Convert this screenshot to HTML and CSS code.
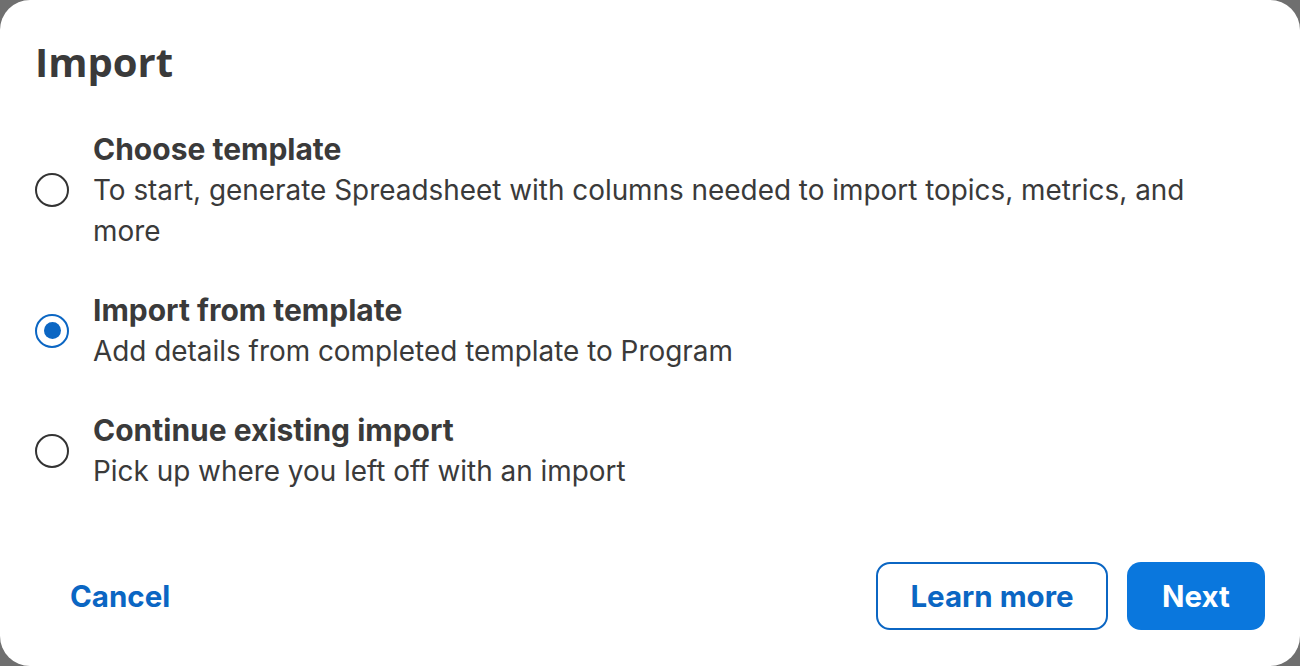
FILE: index.html
```html
<!DOCTYPE html>
<html>
<head>
<meta charset="utf-8">
<link rel="stylesheet" href="styles.css">
</head>
<body>
<div class="dialog">
  <h1 class="title">Import</h1>
  <div class="options">
    <label class="option">
      <span class="radio"></span>
      <span class="text">
        <span class="opt-title">Choose template</span>
        <span class="opt-desc">To start, generate Spreadsheet with columns needed to import topics, metrics, and more</span>
      </span>
    </label>
    <label class="option">
      <span class="radio checked"></span>
      <span class="text">
        <span class="opt-title">Import from template</span>
        <span class="opt-desc">Add details from completed template to Program</span>
      </span>
    </label>
    <label class="option">
      <span class="radio"></span>
      <span class="text">
        <span class="opt-title">Continue existing import</span>
        <span class="opt-desc">Pick up where you left off with an import</span>
      </span>
    </label>
  </div>
  <div class="footer">
    <button class="btn link">Cancel</button>
    <div class="actions">
      <button class="btn outline">Learn more</button>
      <button class="btn primary">Next</button>
    </div>
  </div>
</div>
</body>
</html>
```
FILE: styles.css
```css
html, body {
  margin: 0;
  padding: 0;
  height: 100%;
  background: #6f6f6f;
}
body {
  font-family: Inter, "Liberation Sans", sans-serif;
  color: #3a3a3a;
}
.dialog {
  box-sizing: border-box;
  width: 1300px;
  height: 666px;
  background: #fff;
  border-radius: 30px;
  padding: 34px 35px 36px 35px;
  display: flex;
  flex-direction: column;
}
.title {
  margin: 0;
  font-family: "Open Sans", sans-serif;
  font-weight: 700;
  font-size: 40px;
  line-height: 56px;
  color: #3a3a3a;
}
.options {
  margin-top: 38px;
  display: flex;
  flex-direction: column;
  gap: 37px;
}
.option {
  display: flex;
  align-items: center;
  gap: 24px;
}
.radio {
  flex: none;
  box-sizing: border-box;
  width: 34px;
  height: 34px;
  border: 2.5px solid #333;
  border-radius: 50%;
  display: flex;
  align-items: center;
  justify-content: center;
}
.radio.checked {
  border-color: #0b66c3;
}
.radio.checked::after {
  content: "";
  width: 17px;
  height: 17px;
  border-radius: 50%;
  background: #0b66c3;
}
.text {
  display: flex;
  flex-direction: column;
  font-size: 27.9px;
  line-height: 41px;
}
.opt-title {
  font-weight: 700;
  font-size: 30px;
  line-height: 42px;
}
.opt-desc {
  font-weight: 400;
  max-width: 1125px;
}
.footer {
  margin-top: auto;
  display: flex;
  align-items: center;
  justify-content: space-between;
}
.actions {
  display: flex;
  gap: 19px;
}
.btn {
  font-family: Inter, "Liberation Sans", sans-serif;
  font-weight: 700;
  font-size: 29.5px;
  height: 68px;
  border-radius: 14px;
  cursor: pointer;
  box-sizing: border-box;
}
.link {
  background: none;
  border: none;
  color: #0b66c3;
  padding: 0 35px;
}
.outline {
  background: #fff;
  border: 2px solid #0b66c3;
  color: #0b66c3;
  width: 232px;
}
.primary {
  background: #0a77dd;
  border: none;
  color: #fff;
  width: 138px;
}
```
